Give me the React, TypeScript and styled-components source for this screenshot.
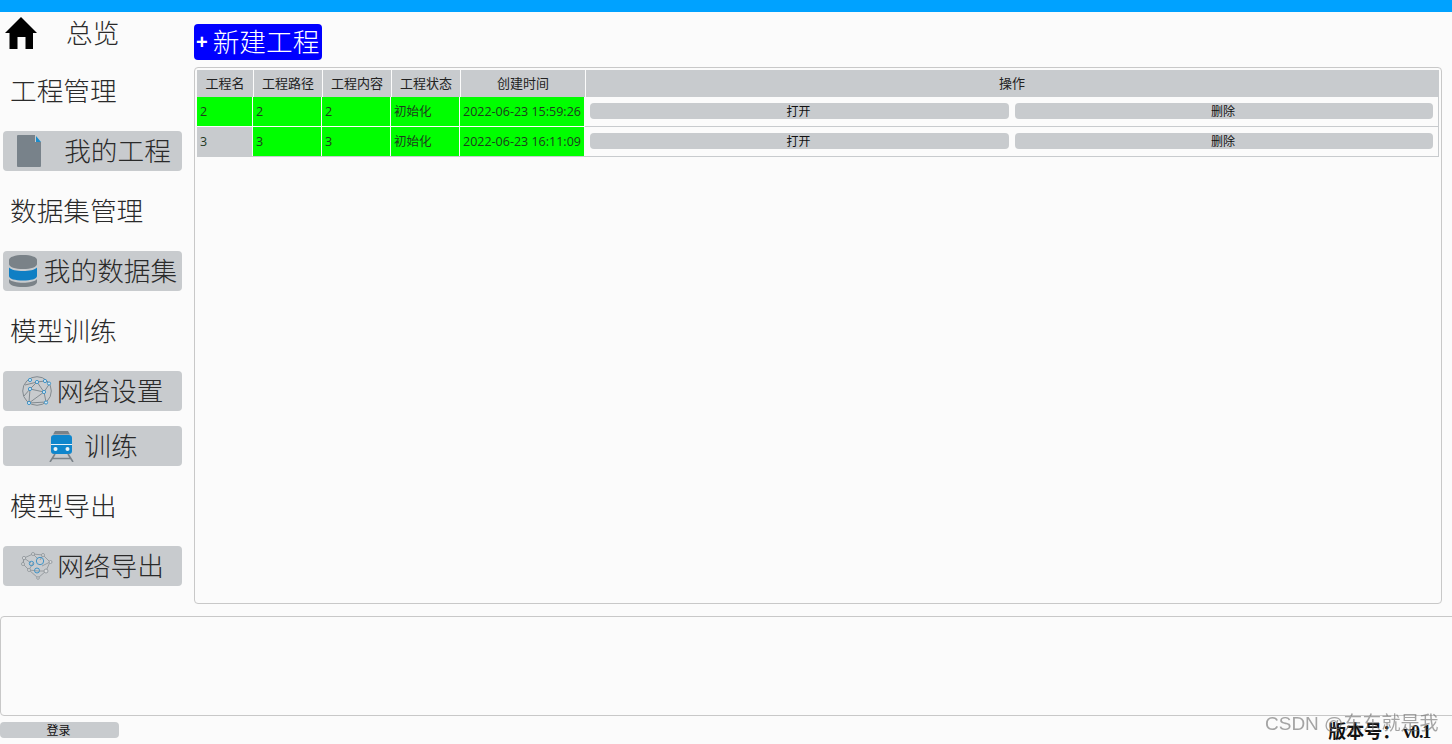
import React from "react";
import styled, { createGlobalStyle } from "styled-components";

const Global = createGlobalStyle`
  html, body { margin: 0; padding: 0; background: #fbfbfb; }
  body { font-family: "Noto Sans CJK SC", "Noto Sans", sans-serif; color: #222; }
`;

const Page = styled.div`
  position: relative;
  width: 1452px;
  height: 744px;
  overflow: hidden;
  display: flex;
  flex-direction: column;
  background: #fbfbfb;
`;
const TopBar = styled.div`
  height: 12px;
  flex: none;
  background: #00a2ff;
`;
const Body = styled.div`
  height: 604px;
  flex: none;
  display: flex;
`;
const Sidebar = styled.nav`
  width: 194px;
  flex: none;
  padding: 5px 0 0 3px;
  box-sizing: border-box;
  display: flex;
  flex-direction: column;
`;
const navText = `
  font-family: "Noto Sans CJK SC", sans-serif;
  font-weight: 300;
  font-size: 26.67px;
  white-space: nowrap;
  color: #2a2a2a;
`;
const NavText = styled.span`
  line-height: 36px;
  padding-bottom: 2px;
`;
const HomeRow = styled.div`
  ${navText}
  height: 32px;
  display: flex;
  align-items: center;
  gap: 29px;
  padding-left: 2px;
  margin-bottom: 22px;
`;
const SectionLabel = styled.div`
  ${navText}
  height: 40px;
  line-height: 38px;
  padding-left: 7px;
  margin-bottom: 20px;
`;
const NavButton = styled.button<{ $gap: number; $after: number; $shift?: number }>`
  ${navText}
  width: 179px;
  height: 40px;
  flex: none;
  border: 0;
  padding: 0 0 0 ${(p) => p.$shift ?? 0}px;
  border-radius: 4px;
  background: #c8cbce;
  display: flex;
  align-items: center;
  justify-content: center;
  gap: ${(p) => p.$gap}px;
  margin-bottom: ${(p) => p.$after}px;
`;
const Main = styled.main`
  flex: 1;
  min-width: 0;
  box-sizing: border-box;
  padding: 12px 10px 12px 0;
  display: flex;
  flex-direction: column;
  align-items: flex-start;
  gap: 7px;
`;
const NewButton = styled.button`
  height: 36px;
  width: 128px;
  flex: none;
  border: 0;
  padding: 0 0 0 2px;
  box-sizing: border-box;
  border-radius: 4px;
  background: #0000ff;
  color: #fff;
  display: flex;
  align-items: center;
  gap: 5px;
  font-family: "Noto Sans CJK SC", sans-serif;
  font-weight: 300;
  font-size: 26.67px;
  white-space: nowrap;
`;
const Plus = styled.span`
  font-family: "Liberation Sans", sans-serif;
  font-size: 20px;
  font-weight: 700;
  line-height: 1;
`;
const TablePanel = styled.section`
  align-self: stretch;
  flex: 1;
  box-sizing: border-box;
  border: 1px solid #c8c8c8;
  border-radius: 4px;
  padding: 2px;
`;
const Grid = styled.div`
  width: 1242px;
  border-bottom: 1px solid #c8cbce;
  border-right: 1px solid #c8cbce;
  box-sizing: border-box;
`;
const HeaderRow = styled.div`
  display: grid;
  grid-template-columns: 56px 68px 68px 68px 124px 1fr;
  column-gap: 1px;
  height: 27px;
`;
const HeaderCell = styled.div`
  background: #c8cbce;
  font-size: 13px;
  line-height: 25px;
  text-align: center;
  color: #222;
  white-space: nowrap;
`;
const DataRow = styled.div`
  display: grid;
  grid-template-columns: 55px 68px 68px 68px 124px 1fr;
  column-gap: 1px;
  height: 30px;
  & + & { height: 29px; }
`;
const DataCell = styled.div<{ $bg: string }>`
  background: ${(p) => p.$bg};
  font-family: "Open Sans", "Noto Sans CJK SC", sans-serif;
  font-size: 12.5px;
  line-height: 29px;
  height: 29px;
  padding-left: 3px;
  color: #1f3a1f;
  white-space: nowrap;
  overflow: hidden;
`;
const ActionCell = styled.div`
  height: 30px;
  box-sizing: border-box;
  border-bottom: 1px solid #c8cbce;
  display: grid;
  grid-template-columns: 419px 418px;
  column-gap: 6px;
  align-items: start;
  padding: 6px 0 0 5px;
`;
const RowButton = styled.button`
  height: 16px;
  border: 0;
  padding: 0 2px 0 0;
  border-radius: 4px;
  background: #c8cbce;
  color: #111;
  font-family: "Noto Sans CJK SC", sans-serif;
  font-size: 12px;
  line-height: 16px;
`;
const LogPanel = styled.div`
  width: 1470px;
  height: 100px;
  flex: none;
  box-sizing: border-box;
  border: 1px solid #c8c8c8;
  border-radius: 4px;
`;
const Footer = styled.footer`
  flex: 1;
  display: flex;
  align-items: flex-start;
  justify-content: space-between;
  padding: 6px 22px 0 0;
`;
const LoginButton = styled.button`
  width: 119px;
  height: 16px;
  border: 0;
  padding: 0 2px 0 0;
  border-radius: 4px;
  background: #c8cbce;
  color: #111;
  font-family: "Noto Sans CJK SC", sans-serif;
  font-size: 12px;
  line-height: 16px;
`;
const Version = styled.div`
  font-family: "Noto Sans CJK SC", sans-serif;
  font-size: 18px;
  font-weight: 700;
  line-height: 20px;
  color: #111;
  white-space: nowrap;
  margin-top: -2px;
`;
const VersionNumber = styled.span`
  font-family: "Liberation Serif", serif;
  letter-spacing: -1.2px;
  margin-left: 3px;
`;
const Watermark = styled.div`
  position: absolute;
  left: 1265px;
  top: 712px;
  font-family: "Liberation Sans", "Noto Sans CJK SC", sans-serif;
  font-size: 19px;
  line-height: 24px;
  color: rgba(110, 110, 110, 0.62);
  white-space: nowrap;
  filter: blur(0.3px);
`;

const HomeIcon = () => (
  <svg width="32" height="32" viewBox="0 0 32 32">
    <path d="M16 0 32 16H28V32H20.5V20H12.5V32H4.5V16H0Z" fill="#000" />
  </svg>
);
const DocIcon = () => (
  <svg width="24" height="32" viewBox="0 0 24 32">
    <path d="M1 0H18V7H24V31a1 1 0 0 1-1 1H1a1 1 0 0 1-1-1V1a1 1 0 0 1 1-1Z" fill="#78828a" />
    <path d="M19 1 24 7H19Z" fill="#1b8ccb" />
  </svg>
);
const DbIcon = () => (
  <svg width="28" height="32" viewBox="0 0 28 32">
    <path d="M0 5C0 2 6 0 14 0s14 2 14 5v4c0 3-6 5-14 5S0 12 0 9Z" fill="#7a8288" />
    <path d="M0 12.500c2 2.500 8 3.500 14 3.500s12-1 14-3.500V21c0 3-6 4.500-14 4.500S0 24 0 21Z" fill="#0f7fc4" />
    <path d="M0 24c2 2.500 8 3.800 14 3.800S26 26.500 28 24v3c0 3-6 5-14 5S0 30 0 27Z" fill="#7a8288" />
  </svg>
);
const GlobeIcon = () => (
  <svg width="30" height="30" viewBox="0 0 30 30" fill="none" stroke="#7a8288" strokeWidth="0.9">
    <circle cx="15" cy="15" r="14.3" />
    <path d="M8 13 15 6 23 5 27 7M8 13 7 26M8 13 22 16 24 26 7 27M15 6 22 16M22 16 28 7M3 9 15 6M8 13 2 20M7 27 22 16" />
    <g fill="#d6e6f0" stroke="#3f94c8" strokeWidth="1">
      <circle cx="8" cy="13" r="1.600" />
      <circle cx="15" cy="6" r="1.600" />
      <circle cx="7" cy="27" r="1.600" />
      <circle cx="22" cy="16" r="1.600" />
      <circle cx="23" cy="5" r="1.600" />
      <circle cx="27" cy="7.500" r="1.600" />
      <circle cx="8" cy="4" r="1.600" />
      <circle cx="24" cy="26.500" r="1.600" />
    </g>
  </svg>
);
const TrainIcon = () => (
  <svg width="25" height="31" viewBox="0 0 25 31">
    <path d="M6 0H19L21 3.500H4Z" fill="#7a8288" />
    <path d="M5 4H20a3 3 0 0 1 3 3V20a3 3 0 0 1-3 3H5a3 3 0 0 1-3-3V7a3 3 0 0 1 3-3Z" fill="#0f86cc" />
    <rect x="2" y="13" width="21" height="1" fill="#e8f2f8" />
    <circle cx="6.500" cy="18" r="2" fill="#e8f2f8" />
    <circle cx="18.500" cy="18" r="2" fill="#e8f2f8" />
    <path d="M6 23 1 31M19 23 24 31M3 27.500H22" stroke="#7a8288" strokeWidth="1.600" fill="none" />
  </svg>
);
const BrainIcon = () => (
  <svg width="32" height="28" viewBox="0 0 32 28" fill="none" stroke="#8a9096" strokeWidth="0.8">
    <path d="M3 6 12 2 22 3 29 10 25 19 17 26 8 18 2 12ZM3 6 2 12M12 2 17 7M22 3 19 8M29 10 21 14M8 18 12 11M25 19 17 19M8 18 17 19M3 6 10 11" />
    <g fill="#d9dbdd">
      <circle cx="3" cy="6" r="1.600" />
      <circle cx="12" cy="2" r="1.500" />
      <circle cx="22" cy="3" r="1.500" />
      <circle cx="29.500" cy="10" r="1.500" />
      <circle cx="2" cy="12" r="1.500" />
      <circle cx="25" cy="19" r="2" />
      <circle cx="8" cy="18" r="1.500" />
      <circle cx="17" cy="26" r="1.300" />
    </g>
    <g stroke="#3f94c8" strokeWidth="1">
      <circle cx="19" cy="9" r="3.700" />
      <circle cx="10.500" cy="11.500" r="2.200" />
      <circle cx="16" cy="18.500" r="2.500" />
    </g>
  </svg>
);

const headers = ["工程名", "工程路径", "工程内容", "工程状态", "创建时间", "操作"];
const rows = [
  { first: "#00ff00", vals: ["2", "2", "2", "初始化", "2022-06-23 15:59:26"] },
  { first: "#c8cbce", vals: ["3", "3", "3", "初始化", "2022-06-23 16:11:09"] },
];

export default function App() {
  return (
    <Page>
      <Global />
      <TopBar />
      <Body>
        <Sidebar>
          <HomeRow>
            <HomeIcon />
            <NavText>总览</NavText>
          </HomeRow>
          <SectionLabel>工程管理</SectionLabel>
          <NavButton $gap={23} $after={20} $shift={3}>
            <DocIcon />
            <NavText>我的工程</NavText>
          </NavButton>
          <SectionLabel>数据集管理</SectionLabel>
          <NavButton $gap={7} $after={20} $shift={1}>
            <DbIcon />
            <NavText>我的数据集</NavText>
          </NavButton>
          <SectionLabel>模型训练</SectionLabel>
          <NavButton $gap={5} $after={15}>
            <GlobeIcon />
            <NavText>网络设置</NavText>
          </NavButton>
          <NavButton $gap={10} $after={20} $shift={2}>
            <TrainIcon />
            <NavText>训练</NavText>
          </NavButton>
          <SectionLabel>模型导出</SectionLabel>
          <NavButton $gap={4} $after={0}>
            <BrainIcon />
            <NavText>网络导出</NavText>
          </NavButton>
        </Sidebar>
        <Main>
          <NewButton>
            <Plus>+</Plus>
            <NavText>新建工程</NavText>
          </NewButton>
          <TablePanel>
            <Grid>
              <HeaderRow>
                {headers.map((h) => (
                  <HeaderCell key={h}>{h}</HeaderCell>
                ))}
              </HeaderRow>
              {rows.map((r) => (
                <DataRow key={r.vals[0]}>
                  {r.vals.map((v, i) => (
                    <DataCell key={i} $bg={i === 0 ? r.first : "#00ff00"}>
                      {v}
                    </DataCell>
                  ))}
                  <ActionCell>
                    <RowButton>打开</RowButton>
                    <RowButton>删除</RowButton>
                  </ActionCell>
                </DataRow>
              ))}
            </Grid>
          </TablePanel>
        </Main>
      </Body>
      <LogPanel />
      <Footer>
        <LoginButton>登录</LoginButton>
        <Version>
          版本号：<VersionNumber>v0.1</VersionNumber>
        </Version>
      </Footer>
      <Watermark>CSDN @东东就是我</Watermark>
    </Page>
  );
}
